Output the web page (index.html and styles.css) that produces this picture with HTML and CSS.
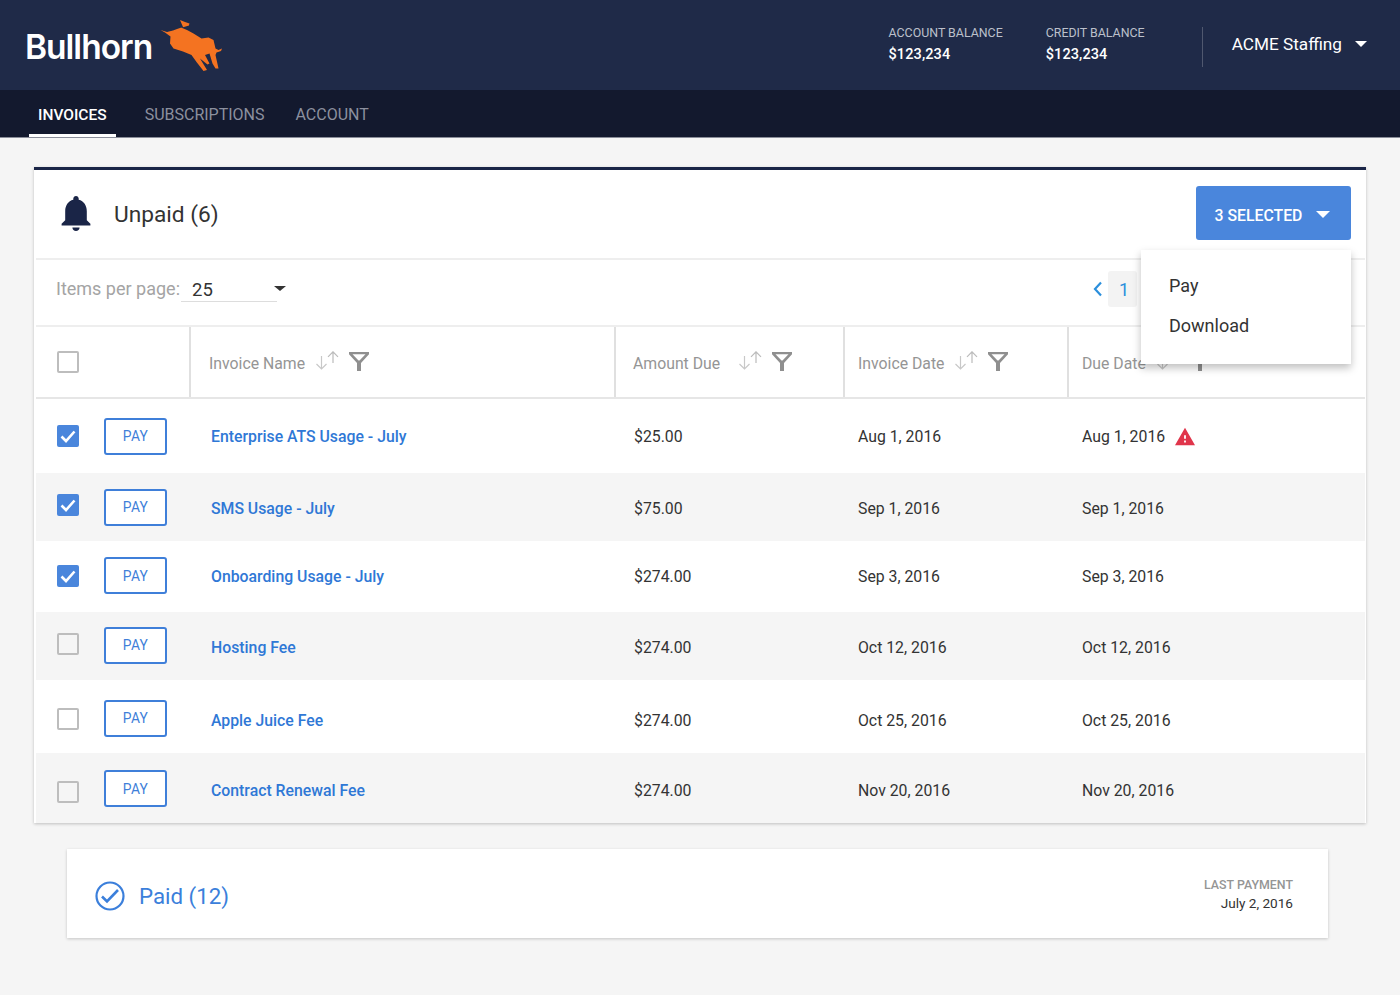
FILE: index.html
```html
<!DOCTYPE html>
<html lang="en">
<head>
<meta charset="utf-8">
<title>Invoices</title>
<link rel="stylesheet" href="styles.css">
</head>
<body>
<header class="topbar">
  <div class="brand">
    <span class="wordmark">Bullhorn</span>
    <svg class="bull" viewBox="0 0 80 70"><path d="M10.5 20 17 22 23 20.500 27 19 33 17 30 10 35 12 39.500 13.500 39.500 12.500 39 15.500 34 17 31 17.500 37 20 43.500 23.500 51.500 28.500 58.500 27.500 63.500 30 65.500 38.500 68.500 40 72 38.500 71 41 66.500 42.500 65.500 45 68.500 58.500 65.500 58.500 62.500 53.500 59.500 43.500 55 45 59.500 53.500 57.500 54.500 50 48.500 57 60 53.500 61 46.500 52 41.500 45 33 41.500 23.500 38.500 20 33.500 20.500 26.500 15 22.500Z" fill="#f47321"/></svg>
  </div>
  <div class="balances">
    <div class="balance balance-account"><div class="balance-label">ACCOUNT BALANCE</div><div class="balance-value">$123,234</div></div>
    <div class="balance"><div class="balance-label">CREDIT BALANCE</div><div class="balance-value">$123,234</div></div>
  </div>
  <div class="account-menu"><span>ACME Staffing</span><i class="caret caret-white"></i></div>
</header>
<nav class="tabs">
  <a class="tab tab-active">INVOICES</a>
  <a class="tab">SUBSCRIPTIONS</a>
  <a class="tab tab-last">ACCOUNT</a>
</nav>
<main class="content">
  <section class="card">
    <div class="card-head">
      <svg class="bell" viewBox="4 2 16 20"><path fill="#1a2547" d="M12 22c1.100 0 2-.9 2-2h-4c0 1.100.9 2 2 2zm6-6v-5c0-3.070-1.630-5.640-4.500-6.320V4c0-.83-.67-1.500-1.500-1.500s-1.500.67-1.500 1.500v.68C7.630 5.360 6 7.920 6 11v5l-2 2v1h16v-1l-2-2z"/></svg>
      <h2 class="card-title">Unpaid (6)</h2>
      <div class="selected-wrap">
        <button class="selected-btn">3 SELECTED<i class="caret caret-white caret-big"></i></button>
        <div class="menu"><div class="menu-item">Pay</div><div class="menu-item">Download</div></div>
      </div>
    </div>
    <div class="toolbar">
      <span class="per-label">Items per page:</span>
      <div class="per-select"><span>25</span></div>
      <i class="caret caret-dark"></i>
      <div class="pager">
        <svg class="chev" viewBox="0 0 10 16"><path d="M8 1.500 2 8l6 6.500" fill="none" stroke="#2b8fdc" stroke-width="2.200"/></svg>
        <span class="page-num">1</span>
      </div>
    </div>
    <div class="grid-row thead">
      <div class="th-first"><span class="checkbox"></span></div>
      <div class="th th-name"><span>Invoice Name</span><svg class="sort" viewBox="0 0 23 19"><use href="#sorticon"/></svg><svg class="funnel" viewBox="0 0 20 19"><use href="#funnelicon"/></svg></div>
      <div class="th th-amount"><span>Amount Due</span><svg class="sort sort-wide" viewBox="0 0 23 19"><use href="#sorticon"/></svg><svg class="funnel" viewBox="0 0 20 19"><use href="#funnelicon"/></svg></div>
      <div class="th th-date"><span>Invoice Date</span><svg class="sort" viewBox="0 0 23 19"><use href="#sorticon"/></svg><svg class="funnel" viewBox="0 0 20 19"><use href="#funnelicon"/></svg></div>
      <div class="th th-date"><span>Due Date</span><svg class="sort" viewBox="0 0 23 19"><use href="#sorticon"/></svg><svg class="funnel" viewBox="0 0 20 19"><use href="#funnelicon"/></svg></div>
    </div>
    <div class="grid-row row r1">
      <div class="td-first"><span class="checkbox checked"><svg viewBox="0 0 22 22"><path d="M4.500 11.500 9 16 17.500 6.500" fill="none" stroke="#fff" stroke-width="2.600"/></svg></span><button class="pay">PAY</button></div>
      <a class="td link">Enterprise ATS Usage - July</a><div class="td td-amount">$25.00</div><div class="td td-date">Aug 1, 2016</div>
      <div class="td td-date">Aug 1, 2016<svg class="warn" viewBox="1 2 22 19"><path fill="#e0354b" d="M1 21h22L12 2 1 21zm12-3h-2v-2h2v2zm0-4h-2v-4h2v4z"/></svg></div>
    </div>
    <div class="grid-row row r2 alt">
      <div class="td-first"><span class="checkbox checked"><svg viewBox="0 0 22 22"><path d="M4.500 11.500 9 16 17.500 6.500" fill="none" stroke="#fff" stroke-width="2.600"/></svg></span><button class="pay">PAY</button></div>
      <a class="td link">SMS Usage - July</a><div class="td td-amount">$75.00</div><div class="td td-date">Sep 1, 2016</div><div class="td td-date">Sep 1, 2016</div>
    </div>
    <div class="grid-row row r3">
      <div class="td-first"><span class="checkbox checked"><svg viewBox="0 0 22 22"><path d="M4.500 11.500 9 16 17.500 6.500" fill="none" stroke="#fff" stroke-width="2.600"/></svg></span><button class="pay">PAY</button></div>
      <a class="td link">Onboarding Usage - July</a><div class="td td-amount">$274.00</div><div class="td td-date">Sep 3, 2016</div><div class="td td-date">Sep 3, 2016</div>
    </div>
    <div class="grid-row row r4 alt">
      <div class="td-first"><span class="checkbox"></span><button class="pay">PAY</button></div>
      <a class="td link">Hosting Fee</a><div class="td td-amount">$274.00</div><div class="td td-date">Oct 12, 2016</div><div class="td td-date">Oct 12, 2016</div>
    </div>
    <div class="grid-row row r5">
      <div class="td-first"><span class="checkbox"></span><button class="pay">PAY</button></div>
      <a class="td link">Apple Juice Fee</a><div class="td td-amount">$274.00</div><div class="td td-date">Oct 25, 2016</div><div class="td td-date">Oct 25, 2016</div>
    </div>
    <div class="grid-row row r6 alt">
      <div class="td-first"><span class="checkbox"></span><button class="pay">PAY</button></div>
      <a class="td link">Contract Renewal Fee</a><div class="td td-amount">$274.00</div><div class="td td-date">Nov 20, 2016</div><div class="td td-date">Nov 20, 2016</div>
    </div>
  </section>
  <section class="paid">
    <svg class="paid-icon" viewBox="0 0 30 30"><circle cx="15" cy="15" r="13.500" fill="none" stroke="#3b7fdb" stroke-width="2.200"/><path d="M7 15.500l5 5 11-11.500" fill="none" stroke="#3b7fdb" stroke-width="2.600"/></svg>
    <h2 class="paid-title">Paid (12)</h2>
    <div class="last-payment"><div class="last-label">LAST PAYMENT</div><div class="last-date">July 2, 2016</div></div>
  </section>
</main>
<svg class="defs" width="0" height="0">
  <defs>
    <g id="sorticon" fill="none" stroke="#c8c8c8" stroke-width="1.200"><path d="M5.500 5v13M.5 13l5 5 5-5"/><path stroke="#bbb" d="M17 12V.8M12 5.800l5-5 5 5"/></g>
    <path id="funnelicon" fill="#8f8f8f" d="M0 0h20v2.200L12 11v8H8v-8L0 2.200zM3.500 2.200 9.500 8.500h1l6-6.300z"/>
  </defs>
</svg>
</body>
</html>
```

FILE: styles.css
```css
* { box-sizing: border-box; }
html, body { margin: 0; padding: 0; }
body {
  width: 1400px;
  height: 995px;
  overflow: hidden;
  background: #f5f5f5;
  font-family: Roboto, "Liberation Sans", sans-serif;
  font-size: 16px;
  color: #333;
}
h2 { margin: 0; font-weight: 400; }
button { font-family: inherit; cursor: pointer; }
i { display: block; }
.defs { display: block; height: 0; }

.topbar {
  height: 90px;
  background: #1f2a48;
  display: flex;
  align-items: center;
  color: #fff;
}
.brand { display: flex; align-items: center; padding-left: 25px; }
.wordmark {
  font-family: Inter, sans-serif;
  font-weight: 600;
  font-size: 33.500px;
  letter-spacing: -1px;
  width: 125px;
  margin-top: 3px;
}
.bull { width: 80px; height: 70px; }
.balances { display: flex; margin-left: auto; margin-bottom: 1px; }
.balance-account { margin-right: 43px; }
.balance-label { font-size: 12.400px; color: #bcc0cb; line-height: 16px; }
.balance-value { font-size: 14.500px; font-weight: 500; line-height: 18px; margin-top: 5px; letter-spacing: .1px; }
.account-menu {
  display: flex;
  align-items: center;
  height: 40px;
  margin: 3px 0 0 57px;
  padding: 0 33px 6px 29px;
  border-left: 1px solid #50586f;
  font-size: 17.200px;
}
.caret {
  width: 0;
  height: 0;
  border-left: 6px solid transparent;
  border-right: 6px solid transparent;
}
.caret-white { border-top: 6px solid #fff; margin-left: 13px; }
.caret-big { border-left-width: 7px; border-right-width: 7px; border-top-width: 7px; margin-left: 14px; margin-top: -3px; }
.caret-dark { border-top: 5px solid #333; margin-left: -3px; margin-top: -9px; }

.tabs {
  height: 48px;
  background: #13192e;
  display: flex;
  gap: 29px;
  padding-left: 29px;
  border-bottom: 1px solid #8a8d99;
}
.tab {
  display: flex;
  align-items: center;
  font-size: 16px;
  padding-top: 2px;
  color: #8c909e;
}
.tab-last { margin-left: 2px; }
.tab-active {
  color: #fff;
  padding: 2px 9px 0;
  box-shadow: inset 0 -3px 0 #fff;
  font-size: 15.500px;
  font-weight: 500;
}

.content { padding: 29px 34px 0; }
.card {
  height: 656px;
  background: #fff;
  border-top: 3px solid #1a2547;
  box-shadow: 0 1px 3px rgba(0, 0, 0, .22);
  padding: 0 1px 0 2px;
}
.card-head {
  height: 90px;
  display: flex;
  align-items: center;
  padding: 0 14px 3px 25px;
  border-bottom: 2px solid #eee;
}
.bell { width: 30px; height: 36px; }
.card-title { font-size: 22.700px; margin: 3px 0 0 23px; color: #333; }
.selected-wrap { margin-left: auto; position: relative; margin-top: 1px; }
.selected-btn {
  width: 155px;
  height: 54px;
  background: #4a86dc;
  border: 0;
  border-radius: 3px;
  color: #fff;
  font-size: 15.800px;
  font-weight: 500;
  padding: 5px 2px 0 0;
  display: flex;
  align-items: center;
  justify-content: center;
}
.menu {
  position: absolute;
  top: 64px;
  right: 0;
  width: 210px;
  height: 114px;
  background: #fff;
  box-shadow: 0 4px 8px rgba(0, 0, 0, .25);
  padding: 16px 0 0 28px;
  z-index: 2;
}
.menu-item { font-size: 18px; line-height: 40px; color: #333; }

.toolbar {
  height: 67px;
  display: flex;
  align-items: center;
  padding-left: 20px;
  border-bottom: 2px solid #eee;
}
.per-label { font-size: 18px; color: #a4a4a4; margin-top: -8px; }
.per-select {
  width: 96px;
  height: 26px;
  font-size: 18.500px;
  padding: 3px 0 0 11px;
  border-bottom: 1px solid #ddd;
  margin: -7px 0 0 1px;
  color: #333;
}
.pager { margin-left: auto; display: flex; align-items: center; padding-right: 228px; margin-top: -7px; }
.chev { width: 10px; height: 16px; }
.page-num {
  width: 29px;
  height: 36px;
  margin-left: 5px;
  padding-left: 3px;
  background: #f3f3f3;
  border-radius: 3px;
  color: #2b8fdc;
  font-size: 18px;
  display: flex;
  align-items: center;
  justify-content: center;
}

.grid-row {
  display: grid;
  grid-template-columns: 153px 425px 229px 224px 1fr;
  align-items: center;
}
.thead { height: 72px; border-bottom: 2px solid #e6e6e6; align-items: stretch; }
.th-first { display: flex; align-items: center; padding-left: 21px; }
.th {
  display: flex;
  align-items: center;
  border-left: 2px solid #e0e0e0;
  font-size: 15.800px;
  color: #959595;
  padding-top: 2px;
}
.th-name { padding-left: 18px; }
.th-amount { padding-left: 17px; }
.th-date { padding-left: 13px; }
.sort { width: 23px; height: 19px; margin-left: 11px; margin-top: -5px; }
.sort-wide { margin-left: 19px; }
.funnel { width: 20px; height: 19px; margin-left: 10px; margin-top: -3px; }

.row { color: #333; font-size: 15.800px; padding-top: var(--o, 0); }
.alt { background: #f5f5f5; }
.r1 { height: 74px; }
.r2 { height: 68px; --c: 4px; --t: 3px; }
.r3 { height: 71px; --c: 2px; --b: 2px; }
.r4 { height: 68px; --c: 5px; --t: 3px; --b: 2px; }
.r5 { height: 73px; --o: 3px; --t: 5px; --k: 2px; }
.r6 { height: 70px; --t: 4px; --k: 7px; --q: 1px; }
.td-first { display: flex; align-items: center; padding-left: 21px; }
.td { padding-top: var(--t, 0); }
.td-first .checkbox { margin-bottom: var(--c, 0); margin-top: var(--k, 0); }
.checkbox {
  width: 22px;
  height: 22px;
  border: 2px solid #bdbdbd;
  border-radius: 2px;
  background: #fff;
  display: block;
}
.alt .checkbox { background: transparent; }
.checked, .alt .checked { background: #4a86dc; border: 0; }
.checked svg { display: block; width: 22px; height: 22px; }
.pay {
  width: 63px;
  height: 37px;
  margin-left: 25px;
  margin-bottom: var(--b, 0);
  margin-top: var(--q, 0);
  background: #fff;
  border: 2px solid #3f7fd9;
  border-radius: 3px;
  color: #3f7fd9;
  font-size: 13.800px;
  letter-spacing: .3px;
}
.link { padding-left: 22px; color: #2f78d6; font-weight: 500; }
.td-amount { padding-left: 20px; }
.td-date { padding-left: 15px; display: flex; align-items: center; }
.warn { width: 20px; height: 19px; margin-left: 10px; }

.paid {
  width: 1261px;
  height: 89px;
  margin: 26px 0 0 33px;
  background: #fff;
  box-shadow: 0 1px 3px rgba(0, 0, 0, .2);
  display: flex;
  align-items: center;
  padding: 5px 35px 0 28px;
}
.paid-icon { width: 30px; height: 30px; }
.paid-title { font-size: 22.300px; color: #3b7fdb; margin-left: 14px; }
.last-payment { margin-left: auto; margin-bottom: 2px; text-align: right; }
.last-label { font-size: 12.400px; font-weight: 500; color: #959595; line-height: 16px; }
.last-date { font-size: 13.600px; color: #333; line-height: 20px; }
```
